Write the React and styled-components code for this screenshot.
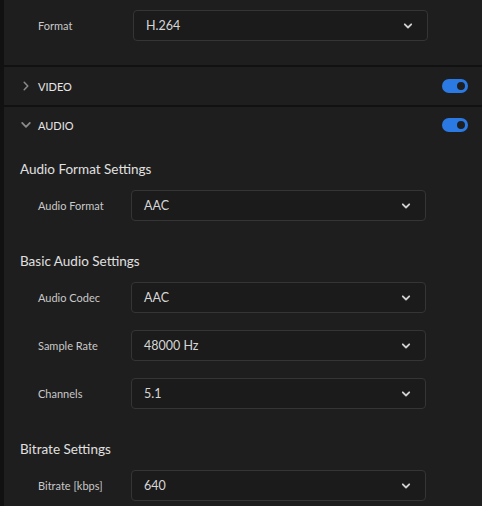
import React from "react";
import styled, { createGlobalStyle } from "styled-components";

const Global = createGlobalStyle`
  html, body {
    margin: 0;
    padding: 0;
    background: #1e1e1e;
  }
  body {
    font-family: Lato, "Open Sans", sans-serif;
    -webkit-font-smoothing: antialiased;
  }
`;

const Panel = styled.div`
  width: 482px;
  height: 506px;
  overflow: hidden;
  box-sizing: border-box;
  background: #1e1e1e;
  border-left: 4px solid #111111;
`;

const TopBlock = styled.div`
  padding: 10px 0 24px 34px;
`;

const Divider = styled.div`
  height: 2px;
  background: #111111;
`;

const SectionHeader = styled.div`
  height: ${(p) => p.$h}px;
  display: flex;
  align-items: center;
  padding: 0 14px 0 16px;
`;

const Chevron = styled.span`
  width: 15px;
  display: flex;
  align-items: center;
`;

const SectionTitle = styled.span`
  flex: 1;
  margin-left: 3px;
  color: #e6e6e6;
  font-size: 11px;
  font-weight: 400;
`;

const Toggle = styled.span`
  width: 26px;
  height: 14px;
  border-radius: 7px;
  background: #2b7ae4;
  display: flex;
  align-items: center;
  justify-content: flex-end;
`;

const Knob = styled.span`
  width: 8px;
  height: 8px;
  border-radius: 50%;
  background: #1f1f1f;
  border: 2px solid #2b7ae4;
  margin-right: 1px;
`;

const Body = styled.div`
  padding: 16px 0 0 16px;
`;

const Group = styled.div`
  display: flex;
  flex-direction: column;
  gap: 17px;
  margin-bottom: 30px;
`;

const GroupTitle = styled.div`
  height: 20px;
  line-height: 20px;
  color: #e0e0e0;
  font-size: 13.5px;
  margin-bottom: -6px;
`;

const Row = styled.div`
  display: flex;
  align-items: center;
  padding-left: ${(p) => p.$pad ?? 18}px;
`;

const Label = styled.div`
  width: ${(p) => p.$w || 93}px;
  color: #c9c9c9;
  font-size: 11px;
`;

const Select = styled.div`
  width: 295px;
  height: 31px;
  box-sizing: border-box;
  display: flex;
  align-items: center;
  justify-content: space-between;
  padding: 0 14px 0 12px;
  background: #1b1b1b;
  border: 1px solid #353535;
  border-radius: 4px;
  color: #d6d6d6;
  font-size: 12.5px;
`;

const ChevronDown = ({ color = "#d0d0d0", size = 10, width = 1.8 }) => (
  <svg width={size} height={size} viewBox="0 0 10 10">
    <path d="M1.8 3.3 L5 6.5 L8.2 3.3" fill="none" stroke={color} strokeWidth={width} strokeLinecap="round" strokeLinejoin="round" />
  </svg>
);

const ChevronRight = () => (
  <svg width="12" height="12" viewBox="0 0 12 12">
    <path d="M4.2 2.2 L7.8 6 L4.2 9.8" fill="none" stroke="#8a8a8a" strokeWidth="1.5" strokeLinecap="round" strokeLinejoin="round" />
  </svg>
);

const Field = ({ label, value, pad, w }) => (
  <Row $pad={pad}>
    <Label $w={w}>{label}</Label>
    <Select>
      <span>{value}</span>
      <ChevronDown />
    </Select>
  </Row>
);

const groups = [
  { title: "Audio Format Settings", fields: [["Audio Format", "AAC"]] },
  {
    title: "Basic Audio Settings",
    fields: [
      ["Audio Codec", "AAC"],
      ["Sample Rate", "48000 Hz"],
      ["Channels", "5.1"],
    ],
  },
  { title: "Bitrate Settings", fields: [["Bitrate [kbps]", "640"]] },
];

export default function App() {
  return (
    <>
      <Global />
      <Panel>
        <TopBlock>
          <Field label="Format" value="H.264" pad={0} w={95} />
        </TopBlock>
        <Divider />
        <SectionHeader $h={38}>
          <Chevron>
            <ChevronRight />
          </Chevron>
          <SectionTitle>VIDEO</SectionTitle>
          <Toggle>
            <Knob />
          </Toggle>
        </SectionHeader>
        <Divider />
        <SectionHeader $h={36}>
          <Chevron>
            <ChevronDown color="#8a8a8a" size={12} width={1.5} />
          </Chevron>
          <SectionTitle>AUDIO</SectionTitle>
          <Toggle>
            <Knob />
          </Toggle>
        </SectionHeader>
        <Body>
          {groups.map((g) => (
            <Group key={g.title}>
              <GroupTitle>{g.title}</GroupTitle>
              {g.fields.map(([l, v]) => (
                <Field key={l} label={l} value={v} />
              ))}
            </Group>
          ))}
        </Body>
      </Panel>
    </>
  );
}
